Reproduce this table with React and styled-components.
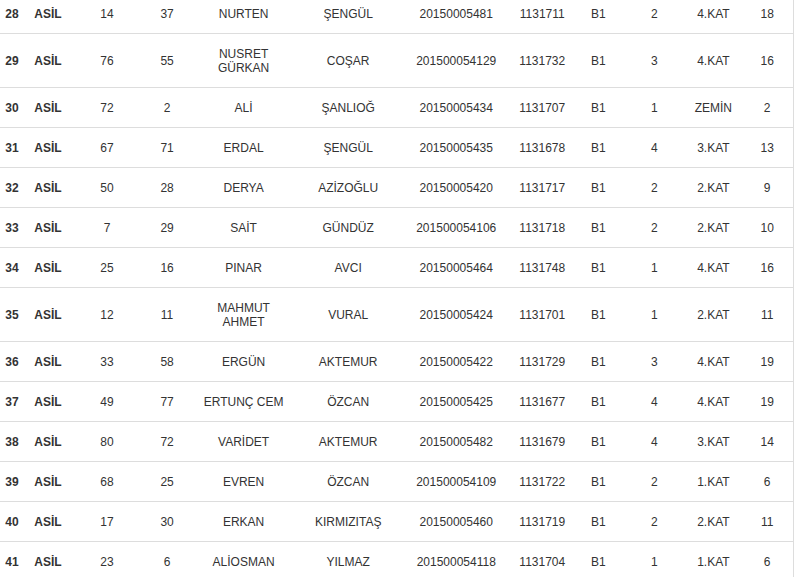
import React from 'react';
import styled, { createGlobalStyle } from 'styled-components';

const GlobalStyle = createGlobalStyle`
  html, body {
    margin: 0;
    padding: 0;
    background: #fff;
    overflow: hidden;
  }
`;

const Page = styled.div`
  width: 794px;
  height: 577px;
  overflow: hidden;
  background: #fff;
`;

const Table = styled.table`
  margin-top: -6px;
  width: 794px;
  border-collapse: collapse;
  table-layout: fixed;
  font-family: "Liberation Sans", Arial, sans-serif;
  font-size: 12px;
  color: #333;
  border-right: 1px solid #ddd;
`;

const Row = styled.tr`
  border-bottom: 1px solid #ddd;
`;

const Cell = styled.td`
  padding: 13px 0 12px;
  line-height: 14px;
  text-align: center;
  vertical-align: middle;
  white-space: pre-line;
  font-weight: ${p => (p.$bold ? 700 : 400)};
`;

// column widths measured off the screenshot
const widths = [24, 48, 70, 50, 103, 106, 110, 62, 50, 62, 56, 52];

const rows = [
  ['28', 'ASİL', '14', '37', 'NURTEN', 'ŞENGÜL', '20150005481', '1131711', 'B1', '2', '4.KAT', '18'],
  ['29', 'ASİL', '76', '55', 'NUSRET\nGÜRKAN', 'COŞAR', '201500054129', '1131732', 'B1', '3', '4.KAT', '16'],
  ['30', 'ASİL', '72', '2', 'ALİ', 'ŞANLIOĞ', '20150005434', '1131707', 'B1', '1', 'ZEMİN', '2'],
  ['31', 'ASİL', '67', '71', 'ERDAL', 'ŞENGÜL', '20150005435', '1131678', 'B1', '4', '3.KAT', '13'],
  ['32', 'ASİL', '50', '28', 'DERYA', 'AZİZOĞLU', '20150005420', '1131717', 'B1', '2', '2.KAT', '9'],
  ['33', 'ASİL', '7', '29', 'SAİT', 'GÜNDÜZ', '201500054106', '1131718', 'B1', '2', '2.KAT', '10'],
  ['34', 'ASİL', '25', '16', 'PINAR', 'AVCI', '20150005464', '1131748', 'B1', '1', '4.KAT', '16'],
  ['35', 'ASİL', '12', '11', 'MAHMUT\nAHMET', 'VURAL', '20150005424', '1131701', 'B1', '1', '2.KAT', '11'],
  ['36', 'ASİL', '33', '58', 'ERGÜN', 'AKTEMUR', '20150005422', '1131729', 'B1', '3', '4.KAT', '19'],
  ['37', 'ASİL', '49', '77', 'ERTUNÇ CEM', 'ÖZCAN', '20150005425', '1131677', 'B1', '4', '4.KAT', '19'],
  ['38', 'ASİL', '80', '72', 'VARİDET', 'AKTEMUR', '20150005482', '1131679', 'B1', '4', '3.KAT', '14'],
  ['39', 'ASİL', '68', '25', 'EVREN', 'ÖZCAN', '201500054109', '1131722', 'B1', '2', '1.KAT', '6'],
  ['40', 'ASİL', '17', '30', 'ERKAN', 'KIRMIZITAŞ', '20150005460', '1131719', 'B1', '2', '2.KAT', '11'],
  ['41', 'ASİL', '23', '6', 'ALİOSMAN', 'YILMAZ', '201500054118', '1131704', 'B1', '1', '1.KAT', '6'],
];

const App = () => (
  <Page>
    <GlobalStyle />
    <Table>
      <colgroup>
        {widths.map((w, i) => (
          <col key={i} style={{ width: w }} />
        ))}
      </colgroup>
      <tbody>
        {rows.map(r => (
          <Row key={r[0]}>
            {r.map((v, i) => (
              <Cell key={i} $bold={i < 2}>{v}</Cell>
            ))}
          </Row>
        ))}
      </tbody>
    </Table>
  </Page>
);

export default App;
